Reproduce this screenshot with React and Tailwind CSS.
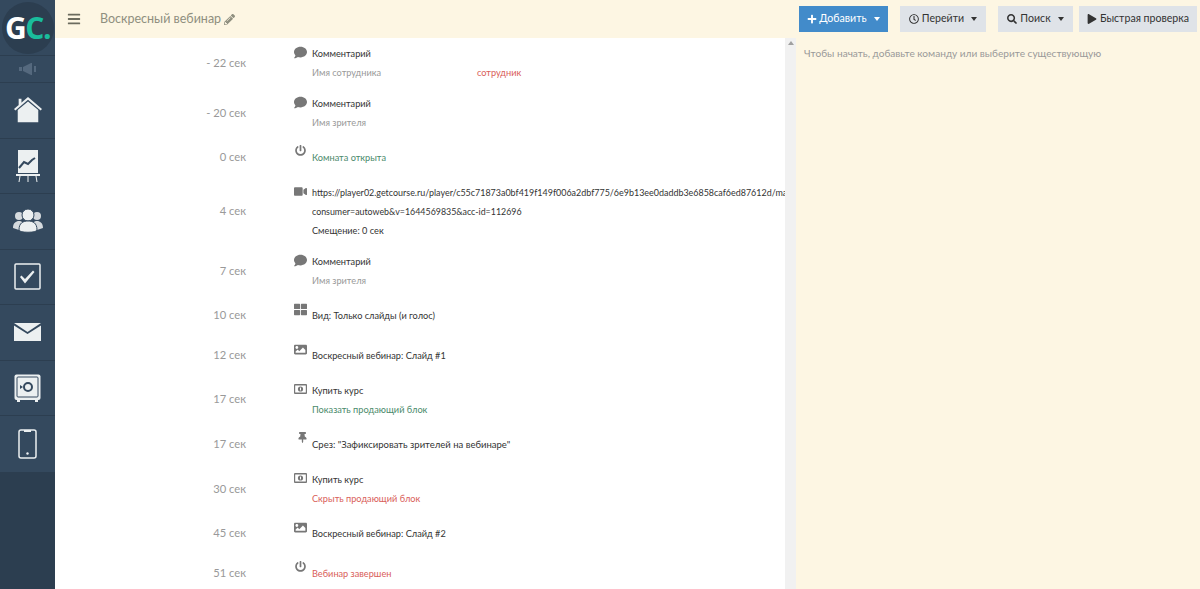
import { FaBars, FaComment, FaImage, FaPencilAlt, FaPlay, FaPlus, FaPowerOff, FaRegClock, FaSearch, FaThLarge, FaThumbtack, FaVideo } from 'react-icons/fa';

function MoneyIcon() {
  return (
    <svg viewBox="0 0 13 10" className="h-[10px] w-[13px]">
      <rect x="0" y="0" width="13" height="10" rx="1" fill="#777" />
      <rect x="1.2" y="1.5" width="10.6" height="7" fill="#fff" />
      <circle cx="6.5" cy="5" r="2.6" fill="#777" />
      <rect x="6" y="3.6" width="1" height="2.8" fill="#fff" />
    </svg>
  );
}

function SideIcon({ children }) {
  return (
    <div className="flex h-[55.500px] items-center justify-center border-b border-[#2c3e50]">
      {children}
    </div>
  );
}

function Sidebar() {
  return (
    <aside className="flex h-full w-[55px] shrink-0 flex-col bg-[#2c3e50]">
      <div className="flex h-[55px] items-center justify-center bg-[#34495e]">
        <div className="flex h-[52px] w-[52px] items-center justify-center rounded-full bg-[#2c3e50] font-['Open_Sans',sans-serif] text-[30px] font-bold tracking-[-1.500px]">
          <span className="text-white">G</span>
          <span className="text-[#1abc9c]">C.</span>
        </div>
      </div>
      <div className="flex h-[28px] items-center justify-center border-y border-[#2c3e50] bg-[#34495e]">
        <svg viewBox="0 0 18 12" className="h-[12px] w-[18px]">
          <path d="M0 4h3v4H0zM4 4l8-4h1v12h-1L4 8zM15 3h2v6h-2z" fill="#55697e" />
        </svg>
      </div>
      <div className="bg-[#34495e]">
        <SideIcon>
          <svg viewBox="0 0 30 28" className="h-[28px] w-[28px]">
            <path d="M5 2h3v4L5 9zM0 13 15 0l15 13-1.500 1.500L15 3 1.500 14.500z" fill="#ecf0f1" />
            <path d="M4 14 15 5l11 9v13H4z" fill="#ecf0f1" />
          </svg>
        </SideIcon>
        <SideIcon>
          <svg viewBox="0 0 24 32" className="h-[32px] w-[24px]">
            <rect x="2" y="0" width="20" height="23" fill="#ecf0f1" />
            <path d="M3 18l5-6 4 2 4-4 3-2" stroke="#34495e" strokeWidth="2" fill="none" />
            <rect x="0" y="24" width="24" height="2" fill="#ecf0f1" />
            <path d="M4 26l-1 6M12 26v6M20 26l1 6" stroke="#ecf0f1" strokeWidth="1" />
          </svg>
        </SideIcon>
        <SideIcon>
          <svg viewBox="0 0 30 26" className="h-[26px] w-[30px]">
            <circle cx="6" cy="8" r="4" fill="#d5dade" />
            <circle cx="24" cy="8" r="4" fill="#d5dade" />
            <path d="M0 20c0-5 3-7 6-7s6 2 6 7l-6 2zM18 20c0-5 3-7 6-7s6 2 6 7l-6 2z" fill="#d5dade" />
            <circle cx="15" cy="7" r="6" fill="#ecf0f1" stroke="#34495e" strokeWidth="1" />
            <path d="M6 22c0-7 4-9 9-9s9 2 9 9c0 3-18 3-18 0z" fill="#ecf0f1" stroke="#34495e" strokeWidth="1" />
          </svg>
        </SideIcon>
        <SideIcon>
          <svg viewBox="0 0 27 27" className="h-[27px] w-[27px]">
            <rect x="1" y="1" width="25" height="25" rx="1" fill="none" stroke="#ecf0f1" strokeWidth="1.500" />
            <path d="M6 14l1.500-1.500 3.500 3.500 8-8.500 1.500 1.500-9.500 11.500z" fill="#ecf0f1" />
          </svg>
        </SideIcon>
        <SideIcon>
          <svg viewBox="0 0 27 18" className="h-[18px] w-[27px]">
            <path d="M0 0h27L13.500 9z" fill="#ecf0f1" />
            <path d="M0 2.500 13.500 11 27 2.500V18H0z" fill="#ecf0f1" />
          </svg>
        </SideIcon>
        <SideIcon>
          <svg viewBox="0 0 27 28" className="h-[28px] w-[27px]">
            <rect x="0.500" y="0.500" width="26" height="25.500" rx="2" fill="#ecf0f1" />
            <rect x="3" y="3" width="21" height="20" rx="1" fill="none" stroke="#34495e" strokeWidth="1" />
            <circle cx="14" cy="13" r="4" fill="none" stroke="#34495e" strokeWidth="2" />
            <path d="M6 11l3 2-3 2z" fill="#34495e" />
            <path d="M3 26h3v2H3zM21 26h3v2h-3z" fill="#ecf0f1" />
          </svg>
        </SideIcon>
        <div className="flex h-[55.500px] items-center justify-center">
          <svg viewBox="0 0 19 30" className="h-[30px] w-[19px]">
            <rect x="1" y="1" width="17" height="28" rx="2" fill="none" stroke="#ecf0f1" strokeWidth="1.500" />
            <rect x="6" y="1" width="7" height="2" fill="#ecf0f1" />
            <circle cx="9.500" cy="24.500" r="1.200" fill="#ecf0f1" />
          </svg>
        </div>
      </div>
    </aside>
  );
}

function Row({ time, icon, height, offset, children }) {
  return (
    <div className={`flex items-center ${height}`}>
      <div className="w-[191px] shrink-0 text-right font-['Lato',sans-serif] text-[11.200px] text-[#999]">
        {time}
      </div>
      <div className="ml-[48px] flex min-w-0 flex-1 items-start">
        <div className={`flex w-[18px] shrink-0 justify-start text-[13px] text-[#777] ${offset}`}>
          {icon}
        </div>
        <div className="min-w-0 flex-1 text-[9.200px] leading-[19px] text-[#333]">{children}</div>
      </div>
    </div>
  );
}

function Timeline() {
  return (
    <div className="min-w-0 flex-1 overflow-hidden font-['Lato',sans-serif]">
      <Row time="- 22 сек" icon={<FaComment />} height="h-[50px]" offset="mt-[2px]">
        <div>Комментарий</div>
        <div className="flex text-[#999]">
          <span className="w-[165px]">Имя сотрудника</span>
          <span className="text-[#d9605a]">сотрудник</span>
        </div>
      </Row>
      <Row time="- 20 сек" icon={<FaComment />} height="h-[50px]" offset="mt-[2px]">
        <div>Комментарий</div>
        <div className="text-[#999]">Имя зрителя</div>
      </Row>
      <Row time="0 сек" icon={<FaPowerOff className="ml-px text-[11px]" />} height="h-[39.500px]" offset="-mt-[3px]">
        <div className="text-[#4b8a6b]">Комната открыта</div>
      </Row>
      <Row time="4 сек" icon={<FaVideo />} height="h-[68.500px]" offset="mt-[2px]">
        <div className="overflow-hidden whitespace-nowrap text-[8.950px]">
          https://player02.getcourse.ru/player/c55c71873a0bf419f149f006a2dbf775/6e9b13ee0daddb3e6858caf6ed87612d/master.m3u8?
        </div>
        <div className="text-[8.850px]">consumer=autoweb&amp;v=1644569835&amp;acc-id=112696</div>
        <div>Смещение: 0 сек</div>
      </Row>
      <Row time="7 сек" icon={<FaComment />} height="h-[50px]" offset="mt-[2px]">
        <div>Комментарий</div>
        <div className="text-[#999]">Имя зрителя</div>
      </Row>
      <Row time="10 сек" icon={<FaThLarge />} height="h-[39.500px]" offset="-mt-[3px]">
        <div>Вид: Только слайды (и голос)</div>
      </Row>
      <Row time="12 сек" icon={<FaImage />} height="h-[39.500px]" offset="-mt-[3px]">
        <div>Воскресный вебинар: Слайд #1</div>
      </Row>
      <Row time="17 сек" icon={<MoneyIcon />} height="h-[49.500px]" offset="mt-[3px]">
        <div>Купить курс</div>
        <div className="text-[#4b8a6b]">Показать продающий блок</div>
      </Row>
      <Row time="17 сек" icon={<FaThumbtack className="ml-[3px] text-[11px]" />} height="h-[39.500px]" offset="-mt-[3px]">
        <div className="text-[9.500px]">Срез: "Зафиксировать зрителей на вебинаре"</div>
      </Row>
      <Row time="30 сек" icon={<MoneyIcon />} height="h-[50px]" offset="mt-[3px]">
        <div>Купить курс</div>
        <div className="text-[#d9605a]">Скрыть продающий блок</div>
      </Row>
      <Row time="45 сек" icon={<FaImage />} height="h-[39.500px]" offset="-mt-[3px]">
        <div>Воскресный вебинар: Слайд #2</div>
      </Row>
      <Row time="51 сек" icon={<FaPowerOff className="ml-px text-[11px]" />} height="h-[39.500px]" offset="-mt-[3px]">
        <div className="text-[#d9605a]">Вебинар завершен</div>
      </Row>
    </div>
  );
}

function Caret() {
  return (
    <span className="ml-[7px] inline-block border-x-[3.500px] border-t-[4px] border-x-transparent border-t-current" />
  );
}

function Header() {
  return (
    <header className="flex h-[38px] shrink-0 items-center bg-[#fdf6e3] font-['Lato',sans-serif] text-[10.600px]">
      <FaBars className="ml-[12px] text-[14px] text-[#6b6b5e]" />
      <div className="ml-[19px] flex items-center text-[12.500px] text-[#8f8f7f]">
        Воскресный вебинар
        <FaPencilAlt className="ml-[3px] text-[11px]" />
      </div>
      <div className="ml-auto flex items-center pr-[3px]">
        <button className="mr-[12px] flex h-[26px] w-[89px] items-center justify-center bg-[#428bca] text-white">
          <FaPlus className="mr-[2px] text-[10px]" />
          Добавить
          <Caret />
        </button>
        <button className="mr-[12px] flex h-[26px] w-[86px] items-center justify-center bg-[#dfe3e8] text-[#333]">
          <FaRegClock className="mr-[3px] text-[10px]" />
          Перейти
          <Caret />
        </button>
        <button className="mr-[6px] flex h-[26px] w-[75px] items-center justify-center bg-[#dfe3e8] text-[#333]">
          <FaSearch className="mr-[3px] text-[10px]" />
          Поиск
          <Caret />
        </button>
        <button className="flex h-[26px] w-[118px] items-center justify-center bg-[#dfe3e8] text-[#333]">
          <FaPlay className="mr-[3px] text-[10px]" />
          Быстрая проверка
        </button>
      </div>
    </header>
  );
}

export default function App() {
  return (
    <div className="flex h-screen w-full overflow-hidden bg-white">
      <Sidebar />
      <div className="flex min-w-0 flex-1 flex-col">
        <Header />
        <div className="flex min-h-0 flex-1">
          <Timeline />
          <div className="flex w-[11px] shrink-0 justify-center bg-[#f1f1f1] pt-[3px]">
            <span className="h-0 w-0 border-x-[3px] border-b-[4px] border-x-transparent border-b-[#a0a0a0]" />
          </div>
          <div className="w-[404px] shrink-0 bg-[#fdf6e3] px-[8px] py-[6px] font-['Lato',sans-serif] text-[10.100px] leading-[18px] text-[#999]">
            Чтобы начать, добавьте команду или выберите существующую
          </div>
        </div>
      </div>
    </div>
  );
}
